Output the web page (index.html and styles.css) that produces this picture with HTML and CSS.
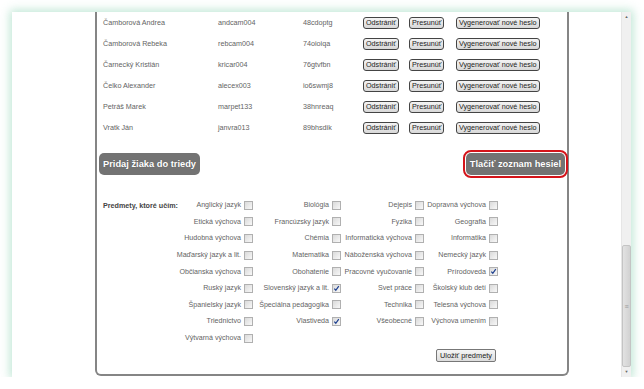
FILE: index.html
```html
<!DOCTYPE html>
<html lang="sk">
<head>
  <meta charset="UTF-8">
  <title>Trieda - žiaci</title>
  <link rel="stylesheet" href="styles.css">
</head>
<body>

<div class="window">
  <div class="viewport">
    <div class="panel">

      <div class="students">
        <div class="student">
          <span>Čamborová Andrea</span><span>andcam004</span><span>48cdoptg</span>
          <span><button class="btn-small">Odstrániť</button></span>
          <span><button class="btn-small">Presunúť</button></span>
          <span><button class="btn-small">Vygenerovať nové heslo</button></span>
        </div>
        <div class="student">
          <span>Čamborová Rebeka</span><span>rebcam004</span><span>74oioiqa</span>
          <span><button class="btn-small">Odstrániť</button></span>
          <span><button class="btn-small">Presunúť</button></span>
          <span><button class="btn-small">Vygenerovať nové heslo</button></span>
        </div>
        <div class="student">
          <span>Čarnecký Kristián</span><span>kricar004</span><span>76gtvfbn</span>
          <span><button class="btn-small">Odstrániť</button></span>
          <span><button class="btn-small">Presunúť</button></span>
          <span><button class="btn-small">Vygenerovať nové heslo</button></span>
        </div>
        <div class="student">
          <span>Čelko Alexander</span><span>alecex003</span><span>io6swmj8</span>
          <span><button class="btn-small">Odstrániť</button></span>
          <span><button class="btn-small">Presunúť</button></span>
          <span><button class="btn-small">Vygenerovať nové heslo</button></span>
        </div>
        <div class="student">
          <span>Petráš Marek</span><span>marpet133</span><span>38hnreaq</span>
          <span><button class="btn-small">Odstrániť</button></span>
          <span><button class="btn-small">Presunúť</button></span>
          <span><button class="btn-small">Vygenerovať nové heslo</button></span>
        </div>
        <div class="student">
          <span>Vratk Ján</span><span>janvra013</span><span>89bhsdik</span>
          <span><button class="btn-small">Odstrániť</button></span>
          <span><button class="btn-small">Presunúť</button></span>
          <span><button class="btn-small">Vygenerovať nové heslo</button></span>
        </div>
      </div>

      <div class="actions">
        <button class="btn-big">Pridaj žiaka do triedy</button>
        <button class="btn-big marked">Tlačiť zoznam hesiel</button>
      </div>

      <div class="subjects">
        <div class="subjects-title">Predmety, ktoré učím:</div>
        <label class="subj">Anglický jazyk <span class="box"></span></label>
        <label class="subj">Biológia <span class="box"></span></label>
        <label class="subj">Dejepis <span class="box"></span></label>
        <label class="subj">Dopravná výchova <span class="box"></span></label>

        <div></div>
        <label class="subj">Etická výchova <span class="box"></span></label>
        <label class="subj">Francúzsky jazyk <span class="box"></span></label>
        <label class="subj">Fyzika <span class="box"></span></label>
        <label class="subj">Geografia <span class="box"></span></label>

        <div></div>
        <label class="subj">Hudobná výchova <span class="box"></span></label>
        <label class="subj">Chémia <span class="box"></span></label>
        <label class="subj">Informatická výchova <span class="box"></span></label>
        <label class="subj">Informatika <span class="box"></span></label>

        <div></div>
        <label class="subj">Maďarský jazyk a lit. <span class="box"></span></label>
        <label class="subj">Matematika <span class="box"></span></label>
        <label class="subj">Náboženská výchova <span class="box"></span></label>
        <label class="subj">Nemecký jazyk <span class="box"></span></label>

        <div></div>
        <label class="subj">Občianska výchova <span class="box"></span></label>
        <label class="subj">Obohatenie <span class="box"></span></label>
        <label class="subj">Pracovné vyučovanie <span class="box"></span></label>
        <label class="subj">Prírodoveda <span class="box checked"><svg viewBox="0 0 8 8"><path d="M1.5 4.2 L3.2 6 L6.6 1.4" /></svg></span></label>

        <div></div>
        <label class="subj">Ruský jazyk <span class="box"></span></label>
        <label class="subj">Slovenský jazyk a lit. <span class="box checked"><svg viewBox="0 0 8 8"><path d="M1.5 4.2 L3.2 6 L6.6 1.4" /></svg></span></label>
        <label class="subj">Svet práce <span class="box"></span></label>
        <label class="subj">Školský klub detí <span class="box"></span></label>

        <div></div>
        <label class="subj">Španielsky jazyk <span class="box"></span></label>
        <label class="subj">Špeciálna pedagogika <span class="box"></span></label>
        <label class="subj">Technika <span class="box"></span></label>
        <label class="subj">Telesná výchova <span class="box"></span></label>

        <div></div>
        <label class="subj">Triednictvo <span class="box"></span></label>
        <label class="subj">Vlastiveda <span class="box checked"><svg viewBox="0 0 8 8"><path d="M1.5 4.2 L3.2 6 L6.6 1.4" /></svg></span></label>
        <label class="subj">Všeobecné <span class="box"></span></label>
        <label class="subj">Výchova umením <span class="box"></span></label>

        <div></div>
        <label class="subj">Výtvarná výchova <span class="box"></span></label>
      </div>

      <div class="save-row">
        <button class="btn-save">Uložiť predmety</button>
      </div>

    </div>
  </div>

  <div class="scrollbar">
    <div class="arrow">&#9650;</div>
    <div class="track"><div class="thumb">&#8801;</div></div>
    <div class="arrow">&#9660;</div>
  </div>
</div>

</body>
</html>
```

FILE: styles.css
```css
:root {
  --text: #636363;
  --border: #858585;
  --btn-dark: #737373;
  --mark: #d4141a;
}

html, body {
  margin: 0;
  background-color: #fff;
  overflow: hidden;
}

body {
  font-family: "Liberation Sans", Arial, sans-serif;
  color: var(--text);
  font-size: 7.2px;
}

.window {
  margin: 12px 13px 0 12px;
  height: 365px;
  display: flex;
  background-color: white;
  box-shadow: 0 0 9px 2px rgba(110, 200, 160, 0.45);
}

.viewport {
  flex: 1;
  overflow: hidden;
}

.panel {
  margin-left: 83px;
  width: 470px;
  height: 362px;
  border: 2px solid var(--border);
  border-top: none;
  border-radius: 0 0 6px 6px;
}

/* zoznam ziakov */
.student {
  display: grid;
  grid-template-columns: 115px 85px 60px 46px 47px auto;
  height: 21px;
  align-items: center;
  padding-left: 6px;
}

.btn-small {
  font-family: "Liberation Sans", Arial, sans-serif;
  font-size: 7.2px;
  color: #222;
  height: 12px;
  padding: 0 2px;
  line-height: 10px;
  border: 1px solid #444;
  border-radius: 3px;
  background: linear-gradient(#f4f4f4, #d8d8d8);
}

.actions {
  display: flex;
  justify-content: space-between;
  padding: 0 2px;
  margin-top: 15px;
}

.btn-big {
  font-family: "Liberation Sans", Arial, sans-serif;
  font-size: 9.3px;
  font-weight: bold;
  color: white;
  height: 22px;
  padding: 0 4px;
  border: none;
  border-radius: 5px;
  background-color: var(--btn-dark);
  text-shadow: 0 0 1px rgba(0,0,0,0.3);
}

.btn-big.marked {
  outline: 2px solid var(--mark);
  outline-offset: 1px;
}

/* predmety */
.subjects {
  display: grid;
  grid-template-columns: 72px 78px 88px 83px 74px;
  grid-auto-rows: 16.6px;
  align-items: center;
  padding-left: 6px;
  margin-top: 22px;
}

.subjects-title {
  font-weight: bold;
  color: #444;
  white-space: nowrap;
}

.subj {
  display: flex;
  justify-content: flex-end;
  align-items: center;
  gap: 3px;
  white-space: nowrap;
  font-size: 7.1px;
}

.box {
  width: 7px;
  height: 7px;
  border: 1px solid #b0b0b0;
  background: linear-gradient(135deg, #dadada, #f8f8f8);
  display: inline-block;
  flex: none;
}

.box svg {
  display: block;
  width: 7px;
  height: 7px;
  fill: none;
  stroke: #1d3f8f;
  stroke-width: 1.4;
}

.save-row {
  display: flex;
  justify-content: flex-end;
  width: 399px;
  margin-top: 3px;
}

.btn-save {
  font-family: "Liberation Sans", Arial, sans-serif;
  font-size: 7.4px;
  color: #222;
  height: 13px;
  padding: 0 3px;
  border: 1px solid #777;
  border-radius: 2px;
  background: linear-gradient(#f6f6f6, #dcdcdc);
}

/* posuvnik */
.scrollbar {
  width: 9px;
  background-color: #f0f0f0;
  border-left: 1px solid #e6e6e6;
  display: flex;
  flex-direction: column;
}

.arrow {
  height: 10px;
  font-size: 4px;
  color: #666;
  text-align: center;
  line-height: 10px;
}

.track {
  flex: 1;
  display: flex;
  flex-direction: column;
  justify-content: flex-end;
}

.thumb {
  height: 120px;
  background: linear-gradient(90deg, #e2e2e2, #d2d2d2);
  border: 1px solid #c4c4c4;
  border-radius: 2px;
  font-size: 7px;
  color: #999;
  display: flex;
  align-items: center;
  justify-content: center;
}
```
